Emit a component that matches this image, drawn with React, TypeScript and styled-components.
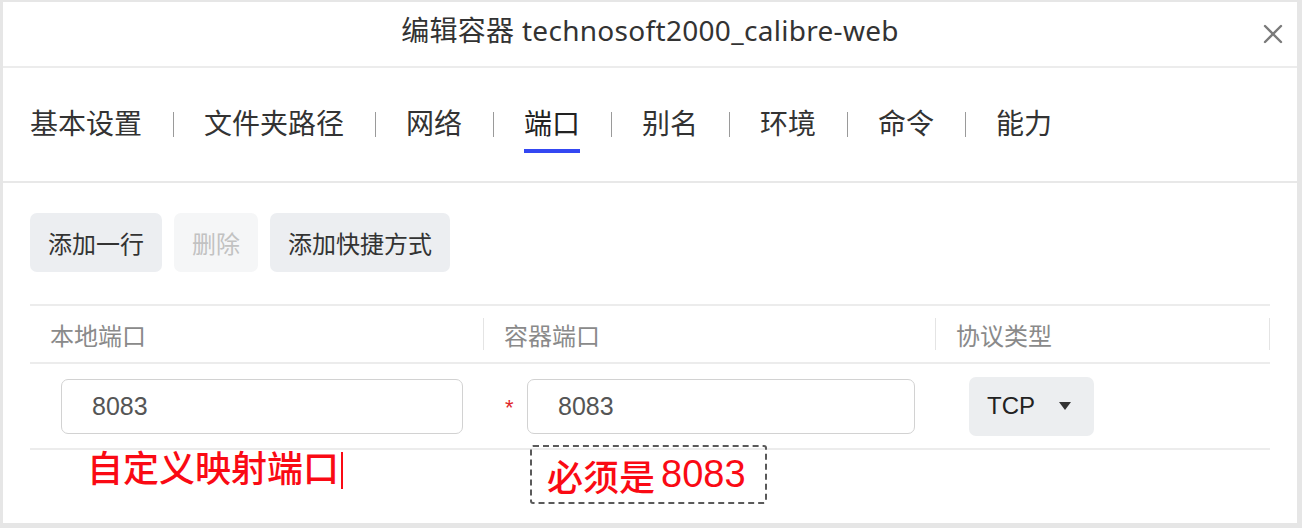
import React from "react";
import styled, { createGlobalStyle } from "styled-components";

const GlobalStyle = createGlobalStyle`
  html, body { margin: 0; padding: 0; }
  body {
    background: #e6e6e6;
    font-family: "Liberation Sans", "Noto Sans CJK SC", sans-serif;
    -webkit-font-smoothing: antialiased;
  }
`;

const Dialog = styled.div`
  margin: 2px 5px 5px 3px;
  height: 521px;
  background: #ffffff;
  display: flex;
  flex-direction: column;
  box-sizing: border-box;
`;

const Header = styled.header`
  height: 64px;
  flex: none;
  display: grid;
  grid-template-columns: 1fr auto 1fr;
  align-items: center;
  border-bottom: 2px solid #ececec;
`;

const Title = styled.h1`
  grid-column: 2;
  margin: 0 0 9px 0;
  font-family: "Noto Sans", "Noto Sans CJK SC", sans-serif;
  font-size: 28px;
  line-height: 34px;
  font-weight: 400;
  letter-spacing: 0.3px;
  color: #333;
`;

const CloseButton = styled.button`
  grid-column: 3;
  justify-self: end;
  margin-right: 13px;
  width: 22px;
  height: 22px;
  padding: 0;
  border: 0;
  background: transparent;
  display: flex;
  align-items: center;
  justify-content: center;
  cursor: pointer;
`;

const TabBar = styled.nav`
  height: 113px;
  flex: none;
  display: flex;
  align-items: center;
  padding-left: 27px;
  border-bottom: 2px solid #e8e8e8;
`;

const Tab = styled.div<{ $active?: boolean }>`
  position: relative;
  font-size: 28px;
  line-height: 30px;
  color: ${(p) => (p.$active ? "#222" : "#333")};
  white-space: nowrap;
  &::after {
    content: "";
    display: ${(p) => (p.$active ? "block" : "none")};
    position: absolute;
    left: 0;
    right: 0;
    bottom: -13px;
    height: 4px;
    background: #3447f2;
  }
`;

const TabDivider = styled.span`
  width: 1px;
  height: 25px;
  background: #9a9a9a;
  margin: 0 30.5px;
`;

const Content = styled.main`
  padding: 30px 27px 0 27px;
`;

const Toolbar = styled.div`
  display: flex;
  gap: 12px;
`;

const Button = styled.button<{ $disabled?: boolean }>`
  height: 59px;
  padding: 0 18px;
  border: 0;
  border-radius: 7px;
  background: ${(p) => (p.$disabled ? "#f5f6f7" : "#eceef1")};
  color: ${(p) => (p.$disabled ? "#c2c2c2" : "#333")};
  font-family: inherit;
  font-size: 24px;
`;

const TableWrap = styled.div`
  position: relative;
  margin-top: 32px;
`;

const Table = styled.div`
  border-top: 2px solid #ececec;
`;

const Row = styled.div<{ $height: number }>`
  display: grid;
  grid-template-columns: 454px 452px 1fr;
  height: ${(p) => p.$height}px;
  border-bottom: 2px solid #ececec;
`;

const HeadCell = styled.div`
  display: flex;
  align-items: center;
  justify-content: space-between;
  padding-left: 20px;
  font-size: 24px;
  color: #8a8a8a;
`;

const ColDivider = styled.span`
  width: 1px;
  height: 32px;
  background: #e4e4e4;
`;

const Cell = styled.div<{ $pad: number }>`
  display: flex;
  align-items: center;
  padding-left: ${(p) => p.$pad}px;
`;

const Required = styled.span`
  width: 22px;
  color: #e0262b;
  font-size: 22px;
  padding-top: 4px;
`;

const Input = styled.div<{ $width: number }>`
  width: ${(p) => p.$width}px;
  height: 55px;
  box-sizing: border-box;
  border: 1.5px solid #d2d2d2;
  border-radius: 7px;
  display: flex;
  align-items: center;
  padding-left: 30px;
  font-size: 25px;
  color: #555;
`;

const Select = styled.div`
  width: 125px;
  height: 59px;
  box-sizing: border-box;
  border-radius: 7px;
  background: #eceef0;
  display: flex;
  align-items: center;
  padding-left: 18px;
  gap: 24px;
  font-size: 24px;
  color: #222;
`;

const Caret = styled.span`
  width: 0;
  height: 0;
  border-left: 6px solid transparent;
  border-right: 6px solid transparent;
  border-top: 8px solid #333;
`;

const NoteLocal = styled.div`
  position: absolute;
  left: 57px;
  top: 146px;
  display: flex;
  align-items: center;
  font-size: 36px;
  line-height: 40px;
  font-weight: 500;
  color: #fa0a14;
`;

const TextCursor = styled.span`
  width: 2px;
  height: 37px;
  margin-left: 2px;
  background: #fa0a14;
`;

const NoteContainer = styled.div`
  position: absolute;
  left: 500px;
  top: 141px;
  width: 237px;
  height: 59px;
  box-sizing: border-box;
  border: 2.5px dashed #5a5a5a;
  border-radius: 3px;
  display: flex;
  align-items: center;
  padding-left: 15px;
  font-size: 36px;
  font-weight: 500;
  color: #fa0a14;
  white-space: nowrap;
`;

const Digits = styled.span`
  margin-left: 6px;
  font-size: 38px;
  font-weight: 400;
`;

const tabs = ["基本设置", "文件夹路径", "网络", "端口", "别名", "环境", "命令", "能力"];

export default function App() {
  return (
    <>
      <GlobalStyle />
      <Dialog>
        <Header>
          <Title>编辑容器 technosoft2000_calibre-web</Title>
          <CloseButton aria-label="关闭">
            <svg width="20" height="20" viewBox="0 0 20 20">
              <path d="M2 2 L18 18 M18 2 L2 18" stroke="#7a7a7a" strokeWidth="2.4" strokeLinecap="round" />
            </svg>
          </CloseButton>
        </Header>
        <TabBar>
          {tabs.map((t, i) => (
            <React.Fragment key={t}>
              {i > 0 && <TabDivider />}
              <Tab $active={t === "端口"}>{t}</Tab>
            </React.Fragment>
          ))}
        </TabBar>
        <Content>
          <Toolbar>
            <Button>添加一行</Button>
            <Button $disabled>删除</Button>
            <Button>添加快捷方式</Button>
          </Toolbar>
          <TableWrap>
            <Table>
              <Row $height={56}>
                <HeadCell>本地端口<ColDivider /></HeadCell>
                <HeadCell>容器端口<ColDivider /></HeadCell>
                <HeadCell>协议类型<ColDivider /></HeadCell>
              </Row>
              <Row $height={84}>
                <Cell $pad={31}>
                  <Input $width={402}>8083</Input>
                </Cell>
                <Cell $pad={21}>
                  <Required>*</Required>
                  <Input $width={388}>8083</Input>
                </Cell>
                <Cell $pad={33}>
                  <Select>
                    TCP
                    <Caret />
                  </Select>
                </Cell>
              </Row>
            </Table>
            <NoteLocal>
              自定义映射端口
              <TextCursor />
            </NoteLocal>
            <NoteContainer>
              必须是<Digits>8083</Digits>
            </NoteContainer>
          </TableWrap>
        </Content>
      </Dialog>
    </>
  );
}
